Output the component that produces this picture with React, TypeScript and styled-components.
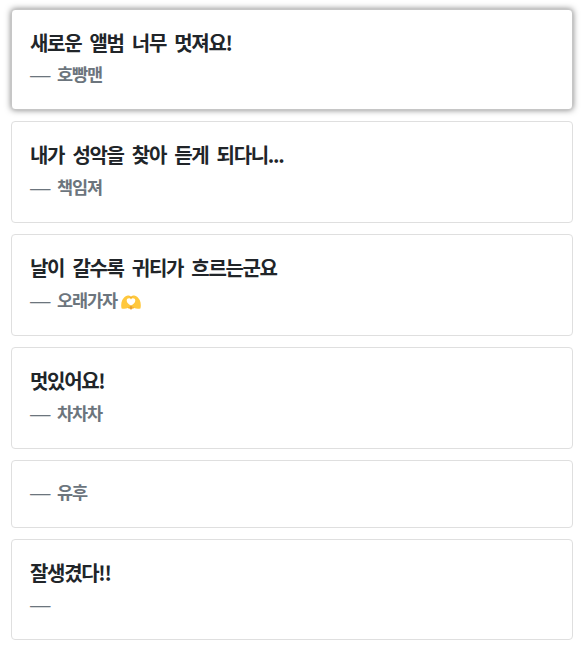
import styled, { createGlobalStyle } from 'styled-components';

interface Comment {
  id: number;
  content: string;
  writer: string;
  heart?: boolean;
}

const comments: Comment[] = [
  { id: 1, content: '새로운 앨범 너무 멋져요!', writer: '호빵맨' },
  { id: 2, content: '내가 성악을 찾아 듣게 되다니...', writer: '책임져' },
  { id: 3, content: '날이 갈수록 귀티가 흐르는군요', writer: '오래가자', heart: true },
  { id: 4, content: '멋있어요!', writer: '차차차' },
  { id: 5, content: '', writer: '유후' },
  { id: 6, content: '잘생겼다!!', writer: '' }
];

function HeartHands() {
  return (
    <HeartIcon viewBox='0 0 20 15' role='img' aria-label='heart hands'>
      <path
        d='M.6 13.400C-.1 10.800.1 7.500 1.300 5.100 2.500 2.700 4.500.7 6.800.5 8.200.3 9.300.9 10 1.900c.7-1 1.800-1.600 3.200-1.400 2.300.2 4.300 2.200 5.500 4.600 1.200 2.400 1.400 5.700.7 8.300-2.100.5-4.300.4-6.200-.4L10 14.500 6.800 13c-1.900.8-4.100.9-6.200.4z'
        fill='#ffc83d'
      />
      <path
        d='M10 10.600C7.400 9.100 5.700 7.400 5.700 5.500c0-2.400 3.200-3 4.300-.9 1.100-2.100 4.300-1.500 4.300.9 0 1.900-1.700 3.600-4.300 5.100z'
        fill='#ffffff'
      />
      <path
        d='M8.800 1.200L10 3l1.200-1.800M7 12.900c1.500-.4 2.500-1.100 3-2.200.5 1.100 1.500 1.800 3 2.200'
        fill='none'
        stroke='#eda52b'
        strokeWidth='.7'
      />
      <path d='M9.300 11.400h1.400v2.800H9.300z' fill='#e08f35' />
    </HeartIcon>
  );
}

export default function App() {
  return (
    <>
      <GlobalStyle />
      <List>
        {comments.map((comment, index) => (
          <Card key={comment.id} $active={index === 0}>
            {comment.content && <Content>{comment.content}</Content>}
            <Writer>
              <Dash>—</Dash>
              {comment.writer && <Name>{comment.writer}</Name>}
              {comment.heart && <HeartHands />}
            </Writer>
          </Card>
        ))}
      </List>
    </>
  );
}

const GlobalStyle = createGlobalStyle`
  * {
    box-sizing: border-box;
  }
  body {
    margin: 0;
    background-color: #ffffff;
    font-family: 'Noto Sans CJK KR', sans-serif;
  }
`;
const List = styled.div`
  display: flex;
  flex-direction: column;
  gap: 11.1px;
  padding: 8.7px 9px 0 11px;
`;
const Card = styled.div<{ $active: boolean }>`
  padding: 18px;
  border: 1px solid ${({ $active }) => ($active ? '#c6c6c6' : '#dfdfdf')};
  border-radius: 4px;
  background-color: #ffffff;
  box-shadow: ${({ $active }) =>
    $active ? '0 0 6px rgba(0, 0, 0, 0.5)' : 'none'};
`;
const Content = styled.p`
  height: 33.75px;
  margin: 0;
  color: #212529;
  font-size: 20px;
  font-weight: bold;
  line-height: 30.4px;
  letter-spacing: -1.32px;
  word-spacing: 5px;
  white-space: nowrap;
`;
const Writer = styled.footer`
  display: flex;
  align-items: flex-start;
  height: 29.9px;
  color: #6c757d;
  font-weight: bold;
  line-height: 27px;
  white-space: nowrap;
`;
const Dash = styled.span`
  width: 27px;
  font-family: 'Liberation Sans', sans-serif;
  font-size: 20.5px;
  font-weight: normal;
`;
const Name = styled.span`
  font-size: 17.5px;
  line-height: 25px;
  letter-spacing: -1.1px;
`;
const HeartIcon = styled.svg`
  width: 20px;
  height: 15px;
  margin: 8px 0 0 4px;
`;
